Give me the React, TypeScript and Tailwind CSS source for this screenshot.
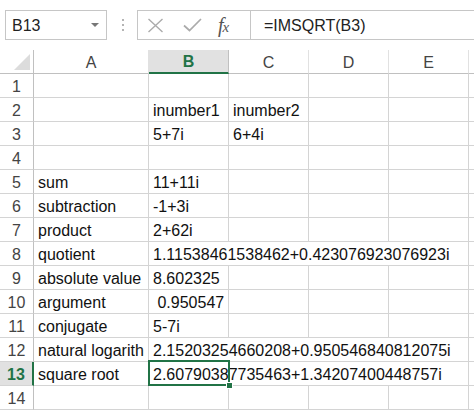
import React from 'react';

const GREEN = '#217346';

type Row = { n: number; a?: string; b?: string; c?: string; span?: boolean };

const rows: Row[] = [
  { n: 1 },
  { n: 2, b: 'inumber1', c: 'inumber2' },
  { n: 3, b: '5+7i', c: '6+4i' },
  { n: 4 },
  { n: 5, a: 'sum', b: '11+11i' },
  { n: 6, a: 'subtraction', b: '-1+3i' },
  { n: 7, a: 'product', b: '2+62i' },
  { n: 8, a: 'quotient', b: '1.11538461538462+0.423076923076923i', span: true },
  { n: 9, a: 'absolute value', b: '8.602325' },
  { n: 10, a: 'argument', b: ' 0.950547' },
  { n: 11, a: 'conjugate', b: '5-7i' },
  // column A is too narrow for the full word, Excel shows it clipped
  { n: 12, a: 'natural logarith', b: '2.15203254660208+0.950546840812075i', span: true },
  { n: 13, a: 'square root', b: '2.60790387735463+1.34207400448757i', span: true },
  { n: 14 },
];

const cols = ['A', 'B', 'C', 'D', 'E'];
const colW: Record<string, string> = { A: 'w-[115px]', B: 'w-[80px]', C: 'w-[80px]', D: 'w-[80px]', E: 'w-[80px]' };

function Cell({ w, text, wide }: { w: string; text?: string; wide?: boolean }) {
  return (
    <div
      className={`${w} h-[24px] shrink-0 border-r border-b border-[#d4d4d4] pl-[4px] leading-[26px] whitespace-pre ${
        wide ? 'overflow-visible' : 'overflow-hidden'
      }`}
    >
      {text}
    </div>
  );
}

export default function App() {
  return (
    <div
      className="w-[474px] h-[410px] overflow-hidden bg-white text-[16px] text-[#111] relative"
      style={{ fontFamily: '"Liberation Sans", Arial, sans-serif' }}
    >
      {/* Formula bar */}
      <div className="h-[50px] flex items-start pt-[10px]">
        <div className="ml-[5px] w-[102px] h-[30px] shrink-0 border border-[#c6c6c6] flex items-center pl-[6px] pr-[7px]">
          <span className="text-[#222] leading-none pt-[1px]">B13</span>
          <span className="ml-auto w-0 h-0 border-l-[4px] border-r-[4px] border-t-[4px] border-l-transparent border-r-transparent border-t-[#777]" />
        </div>
        <div className="ml-[15px] mt-[9px] flex flex-col gap-[3px] shrink-0">
          <span className="w-[2px] h-[2px] bg-[#b4b4b4]" />
          <span className="w-[2px] h-[2px] bg-[#b4b4b4]" />
          <span className="w-[2px] h-[2px] bg-[#b4b4b4]" />
        </div>
        <div className="ml-[13px] h-[30px] w-[400px] border border-[#c6c6c6] flex shrink-0">
          <div className="w-[113px] h-full border-r border-[#c6c6c6] flex items-center shrink-0">
            <svg className="ml-[9px]" width="17" height="15" viewBox="0 0 17 15">
              <path d="M1.5 1 L15.5 14 M15.5 1 L1.5 14" stroke="#ababab" strokeWidth="1.4" fill="none" />
            </svg>
            <svg className="ml-[19px]" width="19" height="14" viewBox="0 0 19 14">
              <path d="M1 7.5 L6.5 12.5 L18 1" stroke="#ababab" strokeWidth="1.7" fill="none" />
            </svg>
            <span
              className="ml-[16px] text-[#555] italic text-[20px] leading-none tracking-[-1px]"
              style={{ fontFamily: '"Liberation Serif", "Times New Roman", serif' }}
            >
              f<span className="text-[15px]">x</span>
            </span>
          </div>
          <div className="pl-[13px] flex items-center text-[#222] pt-[1px]">=IMSQRT(B3)</div>
        </div>
      </div>

      {/* Column headers */}
      <div className="flex h-[24px] text-[#444]">
        <div className="w-[34px] h-[24px] shrink-0 border-r border-b border-[#c0c0c0] relative">
          <svg className="absolute right-[3px] bottom-[3px]" width="16" height="16" viewBox="0 0 16 16">
            <path d="M16 0 L16 16 L0 16 Z" fill="#dcdcdc" />
          </svg>
        </div>
        {cols.map((c) =>
          c === 'B' ? (
            <div
              key={c}
              className={`${colW[c]} h-[24px] shrink-0 bg-[#e1e1e1] border-r border-[#c0c0c0] border-b-2 border-b-[#217346] text-center font-bold leading-[24px]`}
              style={{ color: GREEN }}
            >
              {c}
            </div>
          ) : (
            <div
              key={c}
              className={`${colW[c]} h-[24px] shrink-0 border-r border-b border-r-[#e1e1e1] border-b-[#c0c0c0] text-center leading-[25px]`}
            >
              {c}
            </div>
          )
        )}
        <div className="flex-1 h-[24px] border-b border-[#c0c0c0]" />
      </div>

      {/* Rows */}
      {rows.map((r) => {
        const sel = r.n === 13;
        return (
          <div key={r.n} className="flex h-[24px]">
            {sel ? (
              <div
                className="w-[34px] h-[24px] shrink-0 bg-[#e1e1e1] border-r-2 border-r-[#217346] border-b border-b-[#d4d4d4] text-center font-bold leading-[26px]"
                style={{ color: GREEN }}
              >
                {r.n}
              </div>
            ) : (
              <div className="w-[34px] h-[24px] shrink-0 border-r border-b border-r-[#c0c0c0] border-b-[#d4d4d4] text-center text-[#444] leading-[26px]">
                {r.n}
              </div>
            )}
            <Cell w="w-[115px]" text={r.a} />
            {r.span ? (
              <Cell w="w-[320px]" text={r.b} wide />
            ) : (
              <>
                <Cell w="w-[80px]" text={r.b} />
                <Cell w="w-[80px]" text={r.c} />
                <Cell w="w-[80px]" />
                <Cell w="w-[80px]" />
              </>
            )}
            <div className="flex-1 h-[24px] border-b border-[#d4d4d4]" />
          </div>
        );
      })}

      {/* Selection box on B13 */}
      <div className="absolute left-[148px] top-[360px] w-[82px] h-[26px] border-2 border-[#217346] pointer-events-none" />
      <div className="absolute left-[226px] top-[382px] w-[7px] h-[7px] bg-[#217346] border border-white" />
    </div>
  );
}
